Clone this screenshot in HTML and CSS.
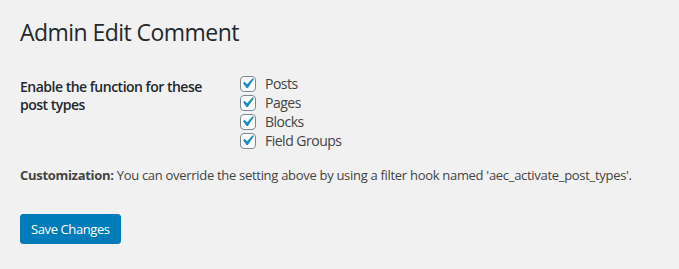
FILE: index.html
```html
<!DOCTYPE html>
<html lang="en">
<head>
<meta charset="utf-8">
<title>Admin Edit Comment</title>
<link rel="stylesheet" href="styles.css">
</head>
<body>
<div class="wrap">
  <h1 class="title">Admin Edit Comment</h1>
  <form class="settings">
    <div class="form-row">
      <div class="row-label">Enable the function for these post types</div>
      <div class="row-field">
        <label class="check"><span class="box"><svg viewBox="0 0 20 20" width="21" height="21"><path d="M14.83 4.89l1.34.94-5.81 8.38H9.02L5.78 9.67l1.34-1.25 2.570 2.4z" fill="#1e8cbe"/></svg></span><span class="check-text">Posts</span></label>
        <label class="check"><span class="box"><svg viewBox="0 0 20 20" width="21" height="21"><path d="M14.83 4.89l1.34.94-5.81 8.38H9.02L5.78 9.67l1.34-1.25 2.57 2.4z" fill="#1e8cbe"/></svg></span><span class="check-text">Pages</span></label>
        <label class="check"><span class="box"><svg viewBox="0 0 20 20" width="21" height="21"><path d="M14.83 4.89l1.34.94-5.81 8.38H9.02L5.78 9.67l1.34-1.25 2.57 2.4z" fill="#1e8cbe"/></svg></span><span class="check-text">Blocks</span></label>
        <label class="check"><span class="box"><svg viewBox="0 0 20 20" width="21" height="21"><path d="M14.83 4.89l1.34.94-5.81 8.38H9.02L5.78 9.67l1.34-1.25 2.57 2.4z" fill="#1e8cbe"/></svg></span><span class="check-text">Field Groups</span></label>
      </div>
    </div>
    <p class="note"><strong>Customization:</strong> You can override the setting above by using a filter hook named 'aec_activate_post_types'.</p>
    <div class="submit"><button type="button" class="button-primary">Save Changes</button></div>
  </form>
</div>
</body>
</html>
```
FILE: styles.css
```css
html, body {
  margin: 0;
  padding: 0;
  background: #f1f1f1;
}
body {
  font-family: "Open Sans", "Noto Sans", sans-serif;
  color: #444;
  font-size: 13px;
  letter-spacing: -0.5px;
}
.wrap {
  padding: 17px 20px 0 20px;
}
.title {
  margin: 0;
  font-size: 23px;
  font-weight: 400;
  line-height: 30px;
  letter-spacing: -0.55px;
  color: #23282d;
}
.settings {
  margin-top: 29px;
}
.form-row {
  display: grid;
  grid-template-columns: 220px 1fr;
}
.row-label {
  font-size: 14px;
  font-weight: 600;
  line-height: 18px;
  color: #23282d;
  width: 200px;
  padding-top: 2px;
}
.row-field {
  display: flex;
  flex-direction: column;
  gap: 3px;
}
.check {
  display: flex;
  align-items: center;
  gap: 9px;
  font-size: 14px;
  line-height: 16px;
  color: #444;
}
.box {
  box-sizing: border-box;
  width: 16px;
  height: 16px;
  border: 1px solid #7e8993;
  border-radius: 4px;
  background: #fff;
  position: relative;
  flex: none;
}
.box svg {
  position: absolute;
  left: -4px;
  top: -4px;
}
.note {
  margin: 17px 0 0 0;
  font-size: 13px;
  line-height: 19px;
  letter-spacing: -0.3px;
  color: #444;
}
.note strong {
  font-weight: 700;
  color: #444;
}
.submit {
  margin-top: 29px;
}
.button-primary {
  font-family: inherit;
  font-size: 13px;
  letter-spacing: -0.4px;
  white-space: nowrap;
  height: 30px;
  padding: 0 10px;
  background: #007cba;
  border: 1px solid #007cba;
  border-radius: 3px;
  color: #fff;
  line-height: 28px;
}
```
